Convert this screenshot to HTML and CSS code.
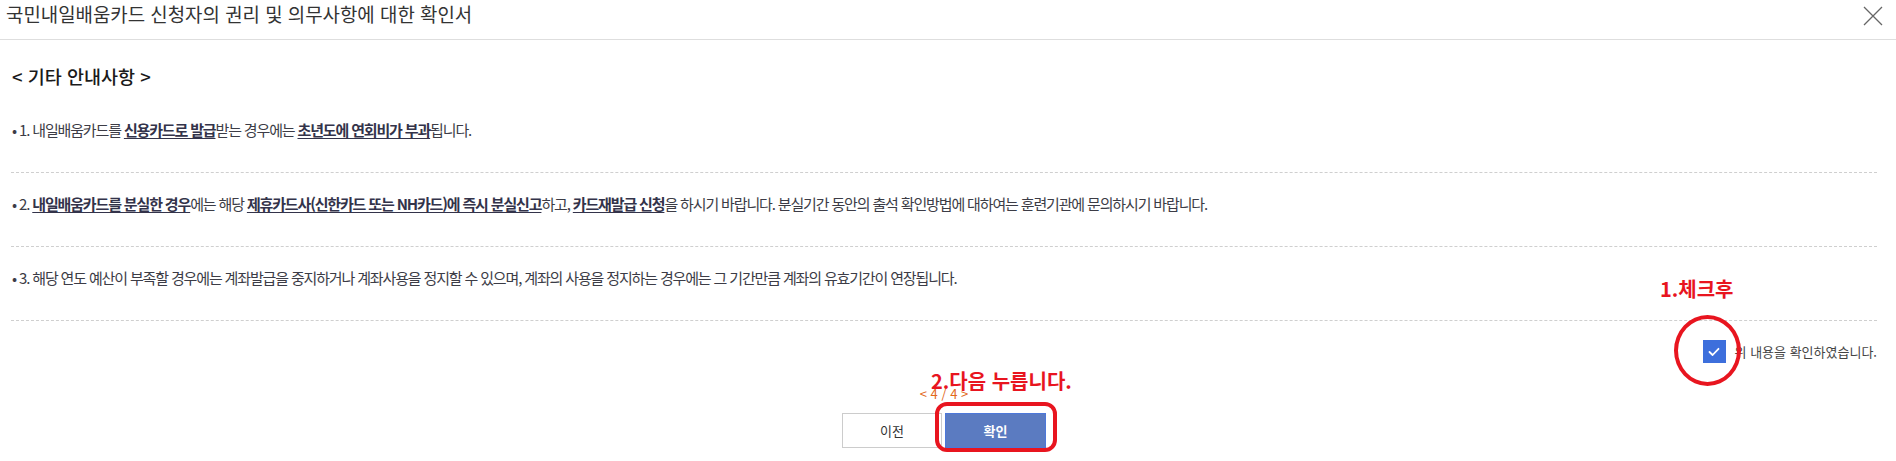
FILE: index.html
```html
<!DOCTYPE html>
<html lang="ko">
<head>
<meta charset="utf-8">
<title>확인서</title>
<link rel="stylesheet" href="styles.css">
</head>
<body>
<div class="modal">
  <header class="modal-head">
    <h1 class="modal-title">국민내일배움카드 신청자의 권리 및 의무사항에 대한 확인서</h1>
    <button class="close-btn" aria-label="닫기">
      <svg width="20" height="20" viewBox="0 0 20 20"><path d="M1 1 L19 19 M19 1 L1 19" stroke="#666" stroke-width="1.3" fill="none"/></svg>
    </button>
  </header>
  <main class="modal-body">
    <h2 class="section-title">&lt; 기타 안내사항 &gt;</h2>
    <ul class="notice-list">
      <li>• 1. 내일배움카드를 <u>신용카드로 발급</u>받는 경우에는 <u>초년도에 연회비가 부과</u>됩니다.</li>
      <li>• 2. <u>내일배움카드를 분실한 경우</u>에는 해당 <u>제휴카드사(신한카드 또는 NH카드)에 즉시 분실신고</u>하고, <u>카드재발급 신청</u>을 하시기 바랍니다. 분실기간 동안의 출석 확인방법에 대하여는 훈련기관에 문의하시기 바랍니다.</li>
      <li>• 3. 해당 연도 예산이 부족할 경우에는 계좌발급을 중지하거나 계좌사용을 정지할 수 있으며, 계좌의 사용을 정지하는 경우에는 그 기간만큼 계좌의 유효기간이 연장됩니다.</li>
    </ul>
    <div class="agree-row">
      <span class="checkbox">
        <svg width="12" height="10" viewBox="0 0 12 10"><path d="M1.5 5 L4.6 8 L10.5 1.8" stroke="#fff" stroke-width="1.8" fill="none" stroke-linecap="round" stroke-linejoin="round"/></svg>
      </span>
      <span class="agree-label">위 내용을 확인하였습니다.</span>
    </div>
    <div class="pager">&lt; 4 / 4 &gt;</div>
    <div class="btn-row">
      <button class="btn btn-prev">이전</button>
      <button class="btn btn-ok">확인</button>
    </div>
  </main>
</div>
<div class="anno anno-text anno-1">1.체크후</div>
<div class="anno anno-ellipse"></div>
<div class="anno anno-text anno-2">2.다음 누릅니다.</div>
<div class="anno anno-rect"></div>
</body>
</html>
```

FILE: styles.css
```css
html, body {
  margin: 0;
  padding: 0;
  background: #fff;
}
body {
  font-family: "Noto Sans CJK KR", "Noto Sans", sans-serif;
  color: #3a3a3a;
  position: relative;
  width: 1896px;
  height: 461px;
  overflow: hidden;
}
.modal-head {
  display: flex;
  justify-content: space-between;
  align-items: flex-start;
  height: 39px;
  border-bottom: 1px solid #dedede;
  padding: 0 13px 0 6px;
}
.modal-title {
  margin: 0;
  padding-top: 2px;
  font-size: 18.9px;
  line-height: 24px;
  font-weight: 400;
  color: #333;
}
.close-btn {
  margin-top: 6px;
  padding: 0;
  border: 0;
  background: none;
  width: 20px;
  height: 20px;
}
.close-btn svg { display: block; }
.modal-body {
  padding: 0 19px 0 11px;
}
.section-title {
  margin: 24px 0 11px 1px;
  font-size: 18.5px;
  line-height: 24px;
  font-weight: 500;
  color: #1a1a1a;
}
.notice-list {
  margin: 0;
  padding: 0;
  list-style: none;
}
.notice-list li {
  padding: 21px 0 32px 1px;
  line-height: 20px;
  font-size: 15px;
  letter-spacing: -1.15px;
  border-bottom: 1px dashed #cfcfcf;
  color: #3c3c46;
}
.notice-list u {
  font-weight: 700;
  color: #33334a;
  text-underline-offset: 2px;
}
.agree-row {
  display: flex;
  justify-content: flex-end;
  align-items: center;
  gap: 9px;
  padding-top: 19px;
}
.checkbox {
  width: 23px;
  height: 23px;
  background: #3d6fdc;
  display: flex;
  align-items: center;
  justify-content: center;
}
.agree-label {
  font-size: 13px;
  line-height: 22px;
  color: #444;
}
.pager {
  margin-top: 23px;
  text-align: center;
  font-size: 13px;
  line-height: 16px;
  color: #e2691a;
}
.btn-row {
  margin-top: 11px;
  display: flex;
  justify-content: center;
  gap: 3px;
}
.btn {
  height: 35px;
  font-family: "Noto Sans CJK KR", "Noto Sans", sans-serif;
  font-size: 13px;
  padding: 0;
  cursor: pointer;
}
.btn-prev {
  width: 100px;
  background: #fff;
  border: 1px solid #cccccc;
  color: #333;
}
.btn-ok {
  width: 101px;
  background: #5b7bc1;
  border: 1px solid #4d78da;
  color: #fff;
  font-weight: 700;
}
.anno {
  position: absolute;
}
.anno-text {
  color: #e8151f;
  font-weight: 700;
  font-family: "Noto Sans CJK KR", "Noto Sans", sans-serif;
  white-space: nowrap;
}
.anno-1 {
  left: 1660px;
  top: 275px;
  font-size: 20px;
  line-height: 28px;
}
.anno-2 {
  left: 931px;
  top: 367px;
  font-size: 20px;
  line-height: 28px;
}
.anno-ellipse {
  left: 1674px;
  top: 315px;
  width: 59px;
  height: 63px;
  border: 4px solid #e8151f;
  border-radius: 50%;
}
.anno-rect {
  left: 935px;
  top: 402px;
  width: 114px;
  height: 42px;
  border: 4px solid #e8151f;
  border-radius: 12px;
}
```
